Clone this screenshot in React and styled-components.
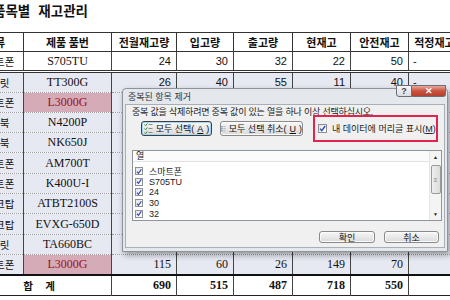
import React from 'react'
import styled, { createGlobalStyle } from 'styled-components'

const Global = createGlobalStyle`
html, body {
  margin: 0;
  padding: 0;
  background: #fff;
}
`

const Page = styled.div`
position: relative;
width: 450px;
height: 300px;
overflow: hidden;
background: #fff;
font-family: "Liberation Serif", "Noto Sans CJK KR", serif;
`

const Title = styled.div`
height: 32px;
box-sizing: border-box;
padding-top: 0;
margin-left: -7px;
font-family: "Noto Sans CJK KR", sans-serif;
font-weight: 700;
font-size: 13.5px;
word-spacing: 5px;
color: #111;
white-space: nowrap;
`

const Table = styled.table`
border-collapse: collapse;
table-layout: fixed;
width: 504px;
margin-left: -34px;
`

const HeadRow = styled.tr`
height: 19px;
`

const Row = styled.tr`
height: ${p => p.$h || 20.3}px;
background: ${p => p.$tint ? '#e6e8f2' : '#fff'};
border-bottom: ${p => p.$sep ? '3px double #333' : '1px dotted #999'};
border-top: ${p => p.$top ? '2px solid #111' : 'none'};
&:last-child { border-bottom: 1px solid #222; }
`

const Th = styled.th`
border: 1px solid #333;
padding: 0;
font-family: "Noto Sans CJK KR", sans-serif;
font-weight: 700;
font-size: 11px;
color: #111;
text-align: center;
white-space: nowrap;
overflow: hidden;
`

const Td = styled.td`
border-left: 1px solid #444;
border-right: 1px solid #444;
padding: 0 ${p => p.$align === 'right' ? '5px' : '4px'};
font-size: ${p => p.$sans ? '11px' : '12px'};
font-family: ${p => p.$sans ? '"Liberation Sans", "Noto Sans CJK KR", sans-serif' : '"Liberation Serif", "Noto Sans CJK KR", serif'};
font-weight: ${p => p.$bold ? 700 : 400};
text-align: ${p => p.$align || 'center'};
color: ${p => p.$hot ? '#9c1020' : '#111'};
background: ${p => p.$hot ? '#d4abb6' : 'transparent'};
white-space: nowrap;
overflow: hidden;
`

const KoCell = styled(Td)`
font-family: "Noto Sans CJK KR", sans-serif;
font-size: 10.5px;
`

/* ---------- dialog ---------- */

const Dialog = styled.div`
position: absolute;
left: 122px;
top: 88px;
width: 326px;
height: 164px;
box-sizing: border-box;
border: 1px solid #8c939b;
border-radius: 4px 4px 0 0;
background: #e4e8ed;
box-shadow: 2px 3px 6px rgba(0, 0, 0, 0.35);
display: flex;
flex-direction: column;
padding: 0 2px 3px 2px;
font-family: "Liberation Sans", "Noto Sans CJK KR", sans-serif;
font-size: 9px;
color: #222;
`

const Caption = styled.div`
height: 15px;
display: flex;
align-items: center;
padding-left: 3px;
color: #333;
`

const CapButtons = styled.div`
position: absolute;
right: 1px;
top: -4px;
display: flex;
`

const CapBtn = styled.div`
width: ${p => p.$w}px;
height: 12px;
box-sizing: border-box;
border: 1px solid #6b6f75;
border-left-width: ${p => p.$first ? '1px' : '0'};
border-radius: ${p => p.$first ? '0 0 0 3px' : '0 0 3px 0'};
background: ${p => p.$close
    ? 'linear-gradient(#e9a99b, #c8533f 50%, #b8402c)'
    : 'linear-gradient(#f6f7f9, #d9dde3)'};
color: ${p => p.$close ? '#fff' : '#444'};
font-weight: 700;
font-size: 9px;
display: flex;
align-items: center;
justify-content: center;
`

const Client = styled.div`
flex: 1;
background: #f0f0f0;
border: 1px solid #a9afb6;
display: flex;
flex-direction: column;
padding: 0 2px 0 6px;
`

const Hint = styled.div`
height: 10px;
line-height: 10px;
margin-top: 2px;
white-space: nowrap;
letter-spacing: -0.2px;
`

const Tools = styled.div`
display: flex;
align-items: center;
height: 27px;
margin-top: -2px;
`

const Btn = styled.div`
box-sizing: border-box;
width: ${p => p.$w}px;
height: ${p => p.$h || 15}px;
margin-left: ${p => p.$ml || 0}px;
border: 1px solid ${p => p.$focus ? '#3c3f44' : '#8a8a8a'};
border-radius: 3px;
background: linear-gradient(#f7f7f7, #e9e9e9 50%, #d9d9d9);
box-shadow: ${p => p.$focus ? 'inset 0 0 0 1px #a8d6f2' : 'inset 0 0 0 1px #fbfbfb'};
display: flex;
align-items: center;
justify-content: center;
gap: 3px;
white-space: nowrap;
color: #111;
`

const Key = styled.span`
text-decoration: underline;
`

const HeadBox = styled.div`
box-sizing: border-box;
width: 125px;
height: 27px;
margin-left: 10px;
border: 2px solid #e2234f;
display: flex;
align-items: center;
padding-left: 3px;
gap: 5px;
white-space: nowrap;
`

const Check = styled.span`
box-sizing: border-box;
width: ${p => p.$s || 9}px;
height: ${p => p.$s || 9}px;
border: 1px solid #8c8f94;
background: linear-gradient(135deg, #e4e4e4, #fff);
display: flex;
align-items: center;
justify-content: center;
flex: none;
`

const ListBox = styled.div`
margin-top: 8px;
height: 71px;
box-sizing: border-box;
border: 1px solid #8e949c;
background: #fff;
display: flex;
`

const ListMain = styled.div`
flex: 1;
display: flex;
flex-direction: column;
`

const ListHead = styled.div`
height: 10px;
line-height: 10px;
padding-left: 3px;
margin-bottom: 4px;
border-bottom: 1px solid #e2e2e2;
background: #fbfbfb;
`

const Item = styled.div`
height: 10.6px;
display: flex;
align-items: center;
padding-left: 2px;
gap: 6px;
`

const Scroll = styled.div`
width: 11px;
border-left: 1px solid #e4e4e4;
background: #f4f4f4;
display: flex;
flex-direction: column;
align-items: center;
justify-content: space-between;
`

const Arrow = styled.div`
height: 12px;
font-size: 5px;
line-height: 12px;
color: #222;
`

const Thumb = styled.div`
box-sizing: border-box;
width: 10px;
height: 29px;
margin-top: 2px;
margin-bottom: auto;
border: 1px solid #9a9a9a;
border-radius: 2px;
background: linear-gradient(90deg, #eeeeee, #dcdcdc);
display: flex;
align-items: center;
justify-content: center;
font-size: 6px;
color: #777;
`

const Footer = styled.div`
display: flex;
justify-content: flex-end;
gap: 9px;
margin-top: 10px;
padding-right: 3px;
`

const CheckMark = () => (
    <svg width="7" height="7" viewBox="0 0 7 7">
        <path d="M1 3.6 L2.8 5.6 L6.2 1" stroke="#2a49b0" strokeWidth="1.3" fill="none" />
    </svg>
)

const SelectAllIcon = () => (
    <svg width="9" height="12" viewBox="0 0 9 12">
        {[1, 5, 9].map(y => (
            <g key={y}>
                <path d={`M0.5 ${y + 0.5} L1.6 ${y + 1.8} L3.4 ${y - 0.6}`} stroke="#2f9a3a" strokeWidth="1" fill="none" />
                <rect x="4.5" y={y} width="4" height="1" fill="#8c8c8c" />
            </g>
        ))}
    </svg>
)

const ClearAllIcon = () => (
    <svg width="9" height="12" viewBox="0 0 9 12">
        {[1, 5, 9].map(y => (
            <g key={y}>
                <rect x="0.5" y={y - 0.5} width="2.5" height="2.5" fill="none" stroke="#5b7fc0" strokeWidth="0.8" />
                <rect x="4.5" y={y} width="4" height="1" fill="#8c8c8c" />
            </g>
        ))}
    </svg>
)

const rows = [
    { k: '스마트폰', id: 'S705TU', n: [24, 30, 32, 22, 50], x: '-', sans: true },
    { k: '태블릿', id: 'TT300G', n: [26, 40, 55, 11, 40], x: '-', sans: true, tint: true },
    { k: '스마트폰', id: 'L3000G', n: [115, 60, 26, 149, 70], x: '', hot: true, tint: true },
    { k: '노트북', id: 'N4200P', n: [38, 25, 30, 33, 30], x: '', tint: true },
    { k: '노트북', id: 'NK650J', n: [42, 35, 40, 37, 40], x: '', tint: true },
    { k: '스마트폰', id: 'AM700T', n: [70, 50, 62, 58, 60], x: '', tint: true },
    { k: '스마트폰', id: 'K400U-I', n: [90, 70, 55, 105, 80], x: '', tint: true },
    { k: '데스크탑', id: 'ATBT2100S', n: [55, 60, 48, 67, 50], x: '', tint: true },
    { k: '데스크탑', id: 'EVXG-650D', n: [60, 60, 58, 62, 50], x: '', tint: true },
    { k: '태블릿', id: 'TA660BC', n: [45, 25, 55, 15, 30], x: '', tint: true },
    { k: '스마트폰', id: 'L3000G', n: [115, 60, 26, 149, 70], x: '', hot: true, tint: true },
]

const heads = ['종류', '제품 품번', '전월재고량', '입고량', '출고량', '현재고', '안전재고', '적정재고량']
const widths = [57, 88, 65, 57, 59, 58, 58, 62]
const listItems = ['스마트폰', 'S705TU', '24', '30', '32']

export default function App() {
    return (
        <Page>
            <Global />
            <Title>품목별  재고관리</Title>
            <Table>
                <colgroup>
                    {widths.map((w, i) => <col key={i} style={{ width: w }} />)}
                </colgroup>
                <thead>
                    <HeadRow>
                        {heads.map(h => <Th key={h}>{h}</Th>)}
                    </HeadRow>
                </thead>
                <tbody>
                    {rows.map((r, i) => (
                        <Row key={i} $tint={r.tint} $sep={i === 0}>
                            <KoCell>{r.k}</KoCell>
                            <Td $hot={r.hot}>{r.id}</Td>
                            {r.n.map((v, j) => <Td key={j} $align="right" $sans={r.sans}>{v}</Td>)}
                            <Td $align="left" $sans>{r.x}</Td>
                        </Row>
                    ))}
                    <Row $top $h={21}>
                        <KoCell colSpan={2} $bold style={{ wordSpacing: 10 }}>합 계</KoCell>
                        {[690, 515, 487, 718, 550].map(v => <Td key={v} $align="right" $bold>{v}</Td>)}
                        <Td />
                    </Row>
                </tbody>
            </Table>

            <Dialog>
                <Caption>중복된 항목 제거</Caption>
                <CapButtons>
                    <CapBtn $w={16} $first>?</CapBtn>
                    <CapBtn $w={34} $close>✕</CapBtn>
                </CapButtons>
                <Client>
                    <Hint>중복 값을 삭제하려면 중복 값이 있는 열을 하나 이상 선택하십시오.</Hint>
                    <Tools>
                        <Btn $w={71} $ml={9} $focus><SelectAllIcon />모두 선택(<Key>A</Key>)</Btn>
                        <Btn $w={83} $ml={8}><ClearAllIcon />모두 선택 취소(<Key>U</Key>)</Btn>
                        <HeadBox>
                            <Check><CheckMark /></Check>
                            <span>내 데이터에 머리글 표시(<Key>M</Key>)</span>
                        </HeadBox>
                    </Tools>
                    <ListBox>
                        <ListMain>
                            <ListHead>열</ListHead>
                            {listItems.map(t => (
                                <Item key={t}>
                                    <Check $s={8}><CheckMark /></Check>
                                    <span>{t}</span>
                                </Item>
                            ))}
                        </ListMain>
                        <Scroll>
                            <Arrow>▲</Arrow>
                            <Thumb>≡</Thumb>
                            <Arrow>▼</Arrow>
                        </Scroll>
                    </ListBox>
                    <Footer>
                        <Btn $w={56} $h={12}>확인</Btn>
                        <Btn $w={55} $h={12}>취소</Btn>
                    </Footer>
                </Client>
            </Dialog>
        </Page>
    )
}
